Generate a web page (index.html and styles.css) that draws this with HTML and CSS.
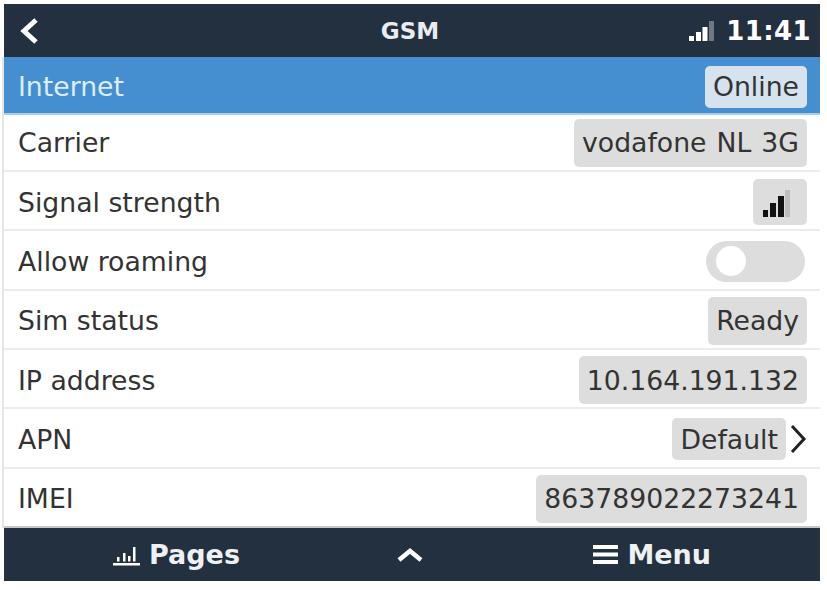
FILE: index.html
```html
<!DOCTYPE html>
<html lang="en">
<head>
    <meta charset="UTF-8">
    <title>GSM</title>
    <link rel="stylesheet" href="styles.css">
</head>
<body>
    <div class="screen">
        <div class="topbar">
            <svg class="back" width="22" height="28" viewBox="0 0 22 28"><path d="M18 3 L6 14 L18 25" fill="none" stroke="#fff" stroke-width="5"/></svg>
            <span class="title">GSM</span>
            <div class="status">
                <svg width="28" height="22" viewBox="0 0 28 22">
                    <rect x="1" y="16" width="5" height="5" fill="#fff"/>
                    <rect x="8" y="12" width="5" height="9" fill="#fff"/>
                    <rect x="14.500" y="7" width="5" height="14" fill="#fff"/>
                    <rect x="21" y="1" width="5" height="20" fill="#6d7883"/>
                </svg>
                <span class="clock">11:41</span>
            </div>
        </div>
        <ul class="list">
            <li class="row selected"><span>Internet</span><span class="value">Online</span></li>
            <li class="row carrier"><span>Carrier</span><span class="value">vodafone NL 3G</span></li>
            <li class="row"><span>Signal strength</span>
                <span class="value signal">
                    <svg width="28" height="30" viewBox="0 0 28 30">
                        <rect x="1" y="21" width="5" height="7" fill="#111"/>
                        <rect x="8" y="14" width="6" height="14" fill="#111"/>
                        <rect x="16" y="7" width="6" height="21" fill="#111"/>
                        <rect x="23" y="1" width="5" height="27" fill="#bdbdbd"/>
                    </svg>
                </span>
            </li>
            <li class="row"><span>Allow roaming</span><span class="switch"><span class="knob"></span></span></li>
            <li class="row"><span>Sim status</span><span class="value">Ready</span></li>
            <li class="row"><span>IP address</span><span class="value">10.164.191.132</span></li>
            <li class="row"><span>APN</span>
                <span class="link">
                    <span class="value">Default</span>
                    <svg width="18" height="30" viewBox="0 0 18 30"><path d="M3 2 L15 15 L3 28" fill="none" stroke="#222" stroke-width="3"/></svg>
                </span>
            </li>
            <li class="row"><span>IMEI</span><span class="value">863789022273241</span></li>
        </ul>
        <div class="bottombar">
            <div class="tab">
                <svg width="27" height="24" viewBox="0 0 27 24">
                    <rect x="0" y="20" width="27" height="2.5" fill="#fff"/>
                    <rect x="4" y="14" width="2.5" height="4.5" fill="#fff"/>
                    <rect x="10" y="10" width="2.5" height="8.5" fill="#fff"/>
                    <rect x="15" y="13" width="2.5" height="5.5" fill="#fff"/>
                    <rect x="20" y="4" width="2.5" height="14.5" fill="#fff"/>
                </svg>
                <span>Pages</span>
            </div>
            <svg class="chevron" width="26" height="16" viewBox="0 0 26 16"><path d="M2 13 L13 4 L24 13" fill="none" stroke="#fff" stroke-width="4.5"/></svg>
            <div class="tab">
                <svg width="25" height="21" viewBox="0 0 25 21">
                    <rect x="0" y="1" width="25" height="4" fill="#fff"/>
                    <rect x="0" y="8.500" width="25" height="4" fill="#fff"/>
                    <rect x="0" y="16" width="25" height="4" fill="#fff"/>
                </svg>
                <span>Menu</span>
            </div>
        </div>
    </div>
</body>
</html>
```

FILE: styles.css
```css
body {
    margin: 0;
    background-color: #fff;
    font-family: "DejaVu Sans", sans-serif;
    color: #333;
    overflow: hidden;
}

.screen {
    width: 816px;
    height: 577px;
    margin: 4px 0 0 4px;
    display: flex;
    flex-direction: column;
}

.topbar {
    height: 53px;
    flex: none;
    background-color: #22303f;
    color: #fff;
    display: flex;
    align-items: center;
    justify-content: space-between;
    position: relative;
    padding: 0 9px 0 14px;
}

.title {
    position: absolute;
    left: 0;
    right: 4px;
    text-align: center;
    font-size: 23px;
    font-weight: bold;
    color: #e9edf0;
}

.status {
    display: flex;
    align-items: center;
    gap: 10px;
}

.clock {
    font-size: 26px;
    font-weight: bold;
    letter-spacing: 0.4px;
}

.list {
    list-style: none;
    margin: 0 0 0 -2px;
    padding: 0;
    flex: 1;
    display: flex;
    flex-direction: column;
    border-left: 2px solid #e6e6e6;
}

.row {
    flex: 1;
    display: flex;
    align-items: center;
    justify-content: space-between;
    padding: 3px 13px 0 14px;
    font-size: 26.7px;
    border-bottom: 2px solid #ececec;
}

.row:last-child {
    border-bottom-color: #c4c8cc;
}

.selected {
    flex: none;
    height: 53px;
    background-color: #458ecf;
    color: #dcedfa;
    border-bottom-color: #a9cce9;
}

.carrier {
    flex: none;
    height: 55px;
    padding-top: 0;
}

.value {
    display: flex;
    align-items: center;
    height: 48px;
    padding: 0 8px;
    background-color: #dddddd;
    border-radius: 5px;
    color: #333;
    word-spacing: 1.5px;
}

.selected .value {
    height: 42px;
    padding: 0 8px;
    background-color: #d6e3ef;
}

.signal {
    width: 54px;
    height: 46px;
    box-sizing: border-box;
    padding: 0 9px;
}

.signal svg {
    margin-top: 4px;
}

.switch {
    width: 99px;
    height: 41px;
    margin-right: 2px;
    border-radius: 21px;
    background-color: #dddddd;
    display: flex;
    align-items: center;
    padding-left: 10px;
    box-sizing: border-box;
}

.knob {
    width: 30px;
    height: 30px;
    border-radius: 50%;
    background-color: #fff;
}

.link {
    display: flex;
    align-items: center;
    gap: 3px;
}

.link .value {
    height: 42px;
}

.bottombar {
    height: 53px;
    flex: none;
    background-color: #22303f;
    color: #eef1f3;
    display: flex;
    align-items: center;
    justify-content: space-between;
    padding: 0 109px;
    font-size: 27px;
    font-weight: bold;
}

.chevron {
    margin-right: 14px;
}

.tab {
    display: flex;
    align-items: center;
    gap: 9px;
}
```
